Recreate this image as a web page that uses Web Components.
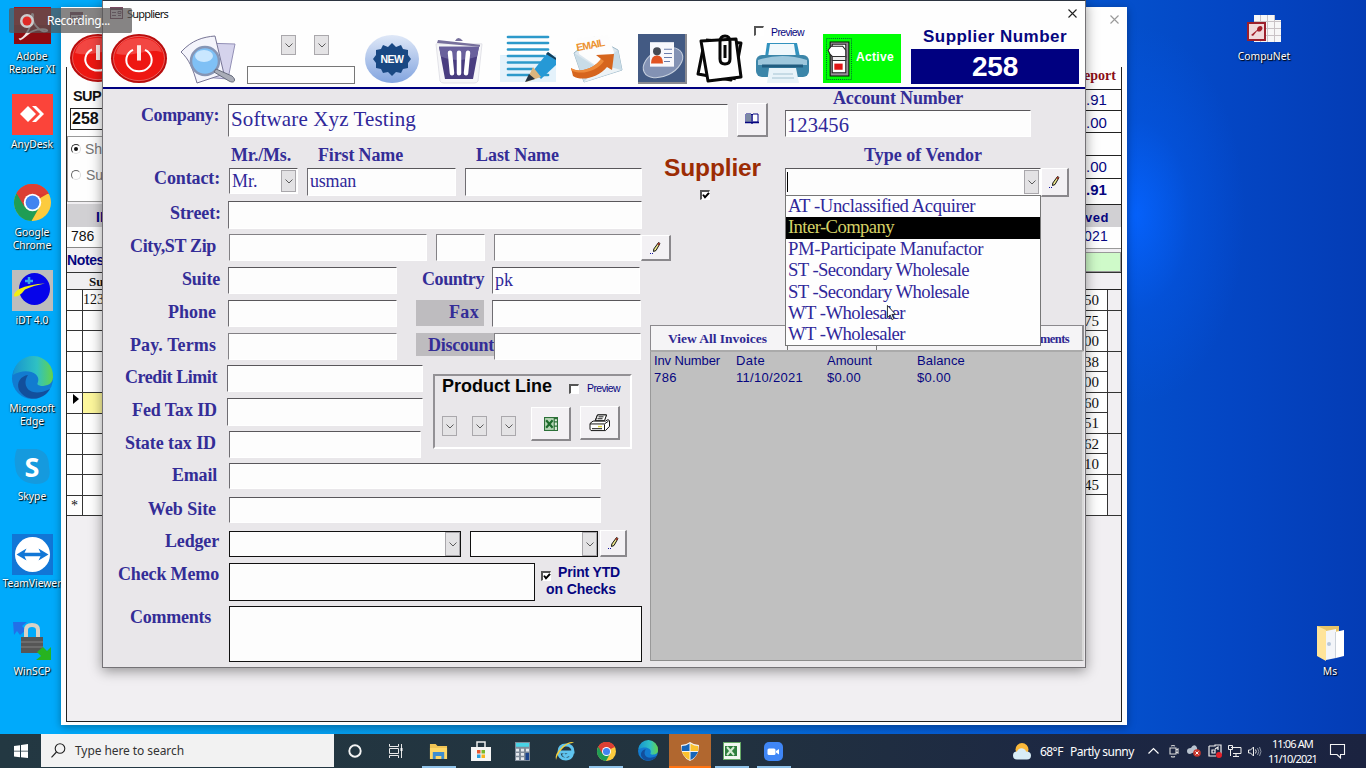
<!DOCTYPE html>
<html lang="en">
<head>
<meta charset="utf-8">
<title>Suppliers</title>
<style>
html,body{margin:0;padding:0}
body{width:1366px;height:768px;overflow:hidden;font-family:"Liberation Sans",Arial,sans-serif}
</style>
</head>
<body>
<desk-top></desk-top>
<script>
const ICONS = {
form:['0 0 13 12','<path fill="#7b4a63" d="M0 0h13v12H0z"/><path fill="#f4eef2" d="M1 3h11v8H1z"/><path stroke="#7b5a73" d="M2 5.5h4M2 8.500h4M8 4.500h3v2H8zM8 8.500h3" fill="none"/>'],
power:['0 0 56 48','<ellipse cx="28" cy="24" rx="28" ry="24" fill="#b90d0d"/><ellipse cx="28" cy="24" rx="25.500" ry="21.700" fill="#ee1712" stroke="#f0807c" stroke-width=".7"/><path d="M5 19C8 7 18 4 28 4s20 4 23 14C38 13 20 24 5 19z" fill="#f4605c" opacity=".65"/><path d="M22 15.500A12.700 11.200 0 1 0 34 15.500" fill="none" stroke="#fff" stroke-width="2"/><path d="M26 11h4v15h-4z" fill="#ffe9e6"/>'],
search:['0 0 56 49','<path d="M24 8l31 1-7 35-26-2z" fill="#d5d3ec" stroke="#9390b6"/><path d="M1 17C12 5 23 2 35 1l9 38-27 9C13 34 9 24 1 17z" fill="#f4f4fb" stroke="#777595"/><circle cx="25" cy="26" r="14" fill="#7fc0f5" stroke="#8695b5" stroke-width="2.500"/><ellipse cx="24" cy="21" rx="9" ry="6" fill="#c9e7ff"/><path d="M36 34l16 7c5 4 2 8-3 5L34 37z" fill="#aaadb8" stroke="#666b7c"/>'],
badge:['0 0 54 48','<defs><linearGradient id="g" x2="0" y2="1"><stop stop-color="#dfe8f7"/><stop offset="1" stop-color="#82a4df"/></linearGradient></defs><ellipse cx="27" cy="24" rx="27" ry="24" fill="url(#g)"/><path d="M27 8l4 4 5-2 2 4 5 1 0 5 3 4-3 4 0 5-5 1-2 4-5-1-4 4-4-4-5 1-2-4-5-1 0-5-3-4 3-4 0-5 5-1 2-4 5 2z" fill="#194883"/>'],
trash:['0 0 52 48','<path d="M3 7h46l-4 38q-1 2-4 2H11q-3 0-4-2z" fill="#f6f6f8" stroke="#e2e2e8"/><path d="M5 3l42 5v2L4 6zM22 4q3-6 8 0z" fill="#77709c"/><path d="M6 10h40l-6 33H12z" fill="#493d80"/><path d="M6 10h40l-2 10Q24 27 8 20z" fill="#69609c"/><path d="M17 16l2 21M26 16v21M35 16l-2 21" stroke="#fff" stroke-width="4.500" stroke-linecap="round"/>'],
edit:['0 0 56 47','<path d="M0 20h56v27H0z" fill="#d4eaf8"/><path d="M0 20Q24 24 56 20V47H0z" fill="#e4f2fb"/><path d="M8 2h40M8 8h40M8 14.500h40M8 21h36M8 27.500h33M8 34h24M8 40h40" stroke="#2c99ca" stroke-width="2.700" stroke-linecap="round"/><path d="M48 17l8 6v7L41 44 33 36z" fill="#2699d6"/><path d="M48 17l8 6v2l-10-6z" fill="#173e58"/><path d="M33 32l8 10-15 5z" fill="#dcb67f"/><path d="M29 39l6 5-10 3z" fill="#26323f"/>'],
mail:['0 0 52 48','<path d="M4 19L24 3l24 13 4 20-38 12z" fill="#dce7ef" stroke="#9db8c7"/><path d="M7 4l31-3 7 20-20 10L9 20z" fill="#fdfdfd"/><path d="M4 19l22 14 22-17 4 20-38 12z" fill="#c9dce7"/><path d="M14 48l16-18 21 6z" fill="#edf3f6"/><path d="M1 34C9 40 25 34 31 25l-5-4 18-1-2 16-5-3C29 43 12 48 3 42z" fill="#d6651d"/><path d="M1 34C9 40 25 34 31 25l3 2C28 37 10 42 1 36z" fill="#ee8a3a"/>'],
card:['0 0 49 49','<path d="M0 0h49v49H0z" fill="#435a83"/><path d="M48 0v48H0" stroke="#8a8a90" stroke-width="2" fill="none"/><ellipse cx="25" cy="28" rx="21" ry="13" fill="#8392b4" stroke="#c7d0de" transform="rotate(-26 25 28)"/><path d="M12 8h24v24H12z" fill="#f8f8fc"/><circle cx="19" cy="17" r="4" fill="#464a54"/><path d="M13 29q0-8 6-8t6 8z" fill="#e15322"/><path d="M26 15h8M26 19h8M26 23h8M26 27h6" stroke="#6a7cab"/>'],
clip:['0 0 46 47','<g fill="#fff" stroke="#080808" stroke-width="3" stroke-linejoin="round"><path d="M6 14L1 39l33 6 5-31z"/><path d="M9 5l35 3-7 37"/><path d="M4 6l35-2 5 38-33 4z"/></g><path d="M23 10v14q0 5 5 5t5-5V7q0-6-5-6t-5 6v3M28 10v13" fill="none" stroke="#080808" stroke-width="3"/>'],
printer:['0 0 53 41','<path d="M11 1h30l3 14H9z" fill="#3292be"/><path d="M14 2h24l2 13H12z" fill="#f0f8fc"/><rect y="13" width="53" height="22" rx="6" fill="#3c86a9"/><path d="M2 18q24-8 49 0v5H2z" fill="#9ec7dc"/><path d="M6 24h41" stroke="#215d80" stroke-width="3"/><path d="M13 26h27l3 15H11z" fill="#e8f3f9"/><path d="M17 32h20M16 36h22" stroke="#a4c3d2"/>'],
toggle:['0 0 25 41','<path d="M.5.500h24v40H.500z" fill="none" stroke="#063" stroke-dasharray="1 1"/><path d="M4 4h18v33H4z" fill="#9a8d9a" stroke="#111"/><path d="M6 6h13v28H6z" fill="#fff" stroke="#222"/><path d="M2 12l3-4h11l3 4v7H7L4 16z" fill="#fff" stroke="#222"/><path d="M6 18h13v4H6z" fill="#eee" stroke="#333"/><path d="M8 25h8v6H8z" fill="#e01515"/>'],
book:['0 0 14 12','<path d="M1 2h5l1 1 1-1h5v8H8l-1 1-1-1H1z" fill="#fff" stroke="#050580"/><path d="M1 2h5v8H1z" fill="#7c8aa4"/><path d="M7 2v10M0 10.500h6M8 10.500h6" stroke="#050580" stroke-width="1.500"/>'],
pencil:['0 0 11 12','<path d="M8.500.500l1.500 1-4 7-2.500 1 .3-2.500z" fill="#ece68a" stroke="#141414"/><path d="M8.500.500l1.500 1-1 2-1.700-1z" fill="#a23a2a"/><path d="M0 11.500h1M2 11.500h1" stroke="#1010a0"/>'],
excel:['0 0 13 13','<path d="M0 0h13v13H0z" fill="#2c7038"/><path d="M1 1h8v11H1z" fill="#b7d6b7"/><path d="M2 3l6 7M8 3l-6 7" stroke="#1d6b2c" stroke-width="2"/><path d="M10 2h2v2h-2zM10 5h2v3h-2zM10 9h2v3h-2z" fill="#dcecd9"/>'],
print2:['0 0 21 19','<path d="M5.500 8.500l3-7.500h9l-3 7.500z" fill="#fff" stroke="#111"/><path d="M1 10l3-2.500h12.500L19 6l1.500 1v6l-4 4.500H2L1 16z" fill="#fff" stroke="#111"/><path d="M6.500 7l2-6h9l-2 6z" fill="#fff" stroke="#111"/><path d="M1 10.500h14.500l4-3M15.500 11v6M3 15.500h10M9.500 3h5M8.500 5h5" fill="none" stroke="#111"/><path d="M9 12.500h4v1.500H9z" fill="#d8d23a"/>'],
close:['0 0 9 9','<path d="M.5.500l8 8m0-8l-8 8" fill="none" stroke="currentColor" stroke-width="1.100"/>'],
chev:['0 0 8 5','<path d="M.5.500L4 4 7.500.500" fill="none" stroke="#5b5b5b"/>'],
tick:['0 0 8 8','<path d="M1 3l2 3 4-5" fill="none" stroke="#000" stroke-width="2"/>'],
cursor:['0 0 10 17','<path d="M.5.500v13l3-3 2 5 2-1-2-4.500h4z" fill="#fff" stroke="#222"/>'],
adobe:['0 0 37 37','<path d="M0 0h37v37H0z" fill="#8e0b10"/><path d="M0 0h37v18H0z" fill="#a81318"/><path d="M7 32c5-2 12-16 11-23-1-3 2-3 1 1-1 8 9 16 14 14 2-2-8-3-14 0C13 26 7 34 6 32z" fill="none" stroke="#f3e4e4" stroke-width="1.700"/>'],
anydesk:['0 0 41 41','<path d="M0 0h41v41H0z" fill="#fb443a"/><path d="M8 20l8-8 8 8-8 8z" fill="#fff"/><path d="M20 12l4 0 8 8-8 8h-4l8-8z" fill="#fff"/>'],
chrome:['0 0 37 37','<circle cx="18.500" cy="18.500" r="18.500" fill="#fccb3e"/><path d="M18.500 18.500L2.500 9.200A18.500 18.500 0 0 1 34.500 9.200z" fill="#d93a2f"/><path d="M18.500 18.500L2.500 9.200A18.500 18.500 0 0 0 17.500 37l8-14z" fill="#1f9d55"/><path d="M18.500 10h16.400a18.500 18.500 0 0 0-.4-.8A18.500 18.500 0 0 0 2.500 9.200l8 13.500z" fill="#dc3f34"/><circle cx="18.500" cy="18.500" r="8.700" fill="#fff"/><circle cx="18.500" cy="18.500" r="6.900" fill="#4184f0"/>'],
idt:['0 0 41 41','<path d="M0 0h41v41H0z" fill="#bdbdbd"/><ellipse cx="22.500" cy="19" rx="15.500" ry="16" fill="#0604ea"/><path d="M7 19Q18 14 33 13.500q-12 2-20 6-6 8-11 7Q1 23 7 19z" fill="#f2ee12"/><path d="M17 7v7M13 11h8" stroke="#39a6ed" stroke-width="2.500"/>'],
edge:['0 0 41 41','<defs><linearGradient id="e" x2="1"><stop stop-color="#1694d0"/><stop offset=".6" stop-color="#2fc1c3"/><stop offset="1" stop-color="#64d34b"/></linearGradient></defs><circle cx="20.500" cy="20.500" r="20.500" fill="#127bd0"/><path d="M1 17A20 20 0 0 1 41 19c0 7-6 9-12 9-4-1-4-2-3-4 3-9-12-15-25-7z" fill="url(#e)"/><path d="M16 17c-7 10 1 24 22 14C32 42 14 45 7 32c-3-8 2-14 9-15z" fill="#124f9c"/>'],
skype:['0 0 37 35','<path d="M3 0h20q13 2 13 18 4 17-14 17Q6 34 2 22-1 8 3 0z" fill="#159ade"/>'],
tv:['0 0 41 41','<path d="M0 0h41v41H0z" fill="#1176d6"/><circle cx="20.500" cy="20.500" r="17.500" fill="#fff"/><path d="M4.500 20.500l10-6-2 4.300h16l-2-4.300 10 6-10 6 2-4.300h-16l2 4.300z" fill="#1176d6"/>'],
winscp:['0 0 38 38','<path d="M0 0h14l-5 4 4 4-6 5-3-4-3 4z" fill="#2270e8"/><path d="M13 17V8q0-5 6-5t6 5v9" fill="none" stroke="#d9d2c6" stroke-width="4"/><path d="M8 15h22v16H8z" fill="#565656"/><path d="M8 20h22M8 25h22" stroke="#6c6c6c" stroke-width="2"/><path d="M38 38H23l5-4-4-4 6-5 4 4 4-4z" fill="#27b31f"/>'],
access:['0 0 34 27','<path d="M7 0h20v5h7v22H7z" fill="#f7f7f7"/><path d="M13.500 0v27M20.500 0v27M27.500 0v27M7 6.500h27M7 13.500h27M7 20.500h27" stroke="#c9c3c6"/><path d="M1 8h17v17H1z" fill="#f0d9da" stroke="#9c1f2b" stroke-width="2"/><path d="M4 20l6-5q0-4 4-4 3 2 0 5-2 1-4 0l-4 5z" fill="#a21f2a"/>'],
folder:['0 0 27 36','<path d="M0 1h22v30H0z" fill="#e7c468"/><path d="M0 1l9 4v31l-9-5z" fill="#ffe49a"/><path d="M9 6l10-2v29l-10 2z" fill="#f3f5f9"/><path d="M18 7l9-2v26l-8 2z" fill="#fff"/><path d="M18.500 7v26" stroke="#ccd2da"/><circle cx="12" cy="19" r="2" fill="#b7c7da"/>'],
rec:['0 0 18 18','<circle cx="9" cy="9" r="7" fill="#ccc"/><circle cx="9" cy="9" r="4.500" fill="#e02b26"/>'],
win:['0 0 14 14','<path d="M0 2l6-.8v5.500H0zM7 1l7-1v6.700H7zM0 7.600h6v5.600L0 12.400zM7 7.600h7V14l-7-.8z" fill="#fff"/>'],
mag:['0 0 15 15','<circle cx="9" cy="5.500" r="4.800" fill="none" stroke="#222" stroke-width="1.100"/><path d="M5.500 9L.5 14.300" stroke="#222" stroke-width="1.200"/>'],
ring:['0 0 14 14','<circle cx="7" cy="7" r="5.700" fill="none" stroke="#f4f4f4" stroke-width="1.900"/>'],
task:['0 0 15 14','<path d="M.5 0v2.500h9V0M.5 14v-2.500h9V14M.5 4.500h9v5h-9zM12.500 0v14" fill="none" stroke="#e8e8e8"/><path d="M11.500 4h2v3h-2z" fill="#fff"/>'],
files:['0 0 20 17','<path d="M1 1h6l2 2h10v13H1z" fill="#f0c455"/><path d="M1 5h18v11H1z" fill="#ffd867"/><path d="M4 9h12v7h-3v-3H7v3H4z" fill="#3f8ed0"/>'],
store:['0 0 20 20','<path d="M6 6V1h8v5" fill="none" stroke="#eee" stroke-width="1.500"/><path d="M0 6h20v14H0z" fill="#f5f5f5"/><path d="M6 9h3.500v3.500H6z" fill="#e8552c"/><path d="M10.500 9H14v3.500h-3.500z" fill="#76b82a"/><path d="M6 13.500h3.500V17H6z" fill="#2a9fdc"/><path d="M10.500 13.500H14V17h-3.500z" fill="#f6b51e"/>'],
calc:['0 0 15 20','<path d="M0 0h15v20H0z" fill="#7f8b99"/><path d="M1 1h13v4H1z" fill="#49d3e6"/><path d="M1 7h3v3H1zM6 7h3v3H6zM11 7h3v3h-3zM1 11.500h3v3H1zM6 11.500h3v3H6zM1 16h3v3H1zM6 16h3v3H6z" fill="#e4e8ec"/><path d="M10.500 11.500H14V19h-3.500z" fill="#1c458c"/>'],
ie:['0 0 20 20','<path d="M4 11h14q0-7-7-7t-7 7 7 7q5 0 6-4h-4q-3 2-5-1" fill="none" stroke="#5fc4ef" stroke-width="3"/><path d="M1 19Q-1 13 8 5 16-1 19 2q-6-1-12 6-5 6-6 11z" fill="#f4cf3d"/>'],
shield:['0 0 18 19','<path d="M9 0q4 3 9 3 0 12-9 16Q0 15 0 3q5 0 9-3z" fill="#f3f3f3"/><path d="M8.500 1.500V9H1q-.5-3 0-5 4 0 7.500-2.500zM9.500 10H17q-2 5-7.500 8z" fill="#1665b8"/><path d="M9.500 1.500Q13 4 17 4q.5 2 0 5H9.500zM1 10h7.500v8Q3 15 1 10z" fill="#fbc12d"/>'],
xl:['0 0 18 18','<path d="M0 0h18v18H0z" fill="#66a866"/><path d="M1 1h16v16H1z" fill="#f2f7f0"/><path d="M2 4h12v10H2z" fill="#2e7f3d"/><path d="M4 5l7 8M11 5l-7 8" stroke="#d6ecd3" stroke-width="2"/>'],
zoom:['0 0 19 19','<rect width="19" height="19" rx="5" fill="#3f86f6"/><rect x="3.500" y="6.500" width="8" height="6.500" rx="1.500" fill="#fff"/><path d="M12 9l3-2v5.500l-3-2z" fill="#fff"/>'],
sun:['0 0 18 17','<circle cx="9" cy="6.500" r="6.500" fill="#fab83a"/><path d="M4 16.500q-4 0-4-4t4-4q2-4 6-3 3 1 3 3 5 0 5 4t-4 4z" fill="#d8edf7"/>'],
up:['0 0 11 6','<path d="M.5 5.500l5-5 5 5" fill="none" stroke="#fff" stroke-width="1.200"/>'],
meet:['0 0 10 13','<path d="M1 3h6v6H1zM7 5l2-1v4L7 7M2 1q2-1 4 0M2 11.500q2 1 4 0" fill="none" stroke="#ddd" stroke-width="1.100"/>'],
cloud:['0 0 14 12','<path d="M3 9q-3 0-3-3t4-3q2-4 5-2 2 2 1 5z" fill="#b9c3cf"/><circle cx="10" cy="8" r="3.800" fill="#c8372d"/><path d="M8.500 6.500l3 3m0-3l-3 3" stroke="#fff"/>'],
lang:['0 0 14 14','<path d="M1 2h6v-1h6v9M1 2v10h7M4 6h3v3H4zM7 5l3-2v3" fill="none" stroke="#eee" stroke-width="1.200"/><circle cx="11" cy="11" r="3" fill="#e5202a"/>'],
net:['0 0 14 12','<path d="M3 2.500h10v6H5M8 9v2.500M5 11.500h6M.5.500h4v4H.500zM2.500 5v6" fill="none" stroke="#eee"/>'],
vol:['0 0 14 11','<path d="M.5 4h2l3-3v9l-3-3h-2z" fill="none" stroke="#eee"/><path d="M7.500 3.500q1.500 2 0 4" fill="none" stroke="#eee"/><path d="M9.500 2q2.500 3.500 0 7M11.500 1q3 4.500 0 9" fill="none" stroke="#8c94a4"/>'],
note:['0 0 15 15','<path d="M.5.500h14v10h-4v3.500l-3.500-3.500H.500z" fill="none" stroke="#f4f4f4" stroke-width="1.100"/>']
};
const SANS="'Liberation Sans',Arial,sans-serif", SERIF="'Liberation Serif','Times New Roman',serif", UI="'Noto Sans','Open Sans',sans-serif";
function define(name, css, render){
  customElements.define(name, class extends HTMLElement{
    connectedCallback(){
      if(this.shadowRoot) return;
      const a=(k,d='')=>this.hasAttribute(k)?this.getAttribute(k):d;
      this.attachShadow({mode:'open'}).innerHTML='<style>*{box-sizing:border-box}:host{display:block;box-sizing:border-box;flex:none}'+css+'</style>'+render(a);
    }
  });
}
const ic=(n,w,h,s='')=>`<ui-icon name="${n}" style="width:${w}px;height:${h}px;${s}"></ui-icon>`;
const fit=(t,w,s='')=>`<fit-text w="${w}" style="${s}">${t}</fit-text>`;

define('ui-icon','svg{display:block;width:100%;height:100%;overflow:visible}',a=>{
  const [vb,body]=ICONS[a('name')];
  return `<svg viewBox="${vb}" preserveAspectRatio="none">${body}</svg>`;
});
define('x-field',`:host{height:26px;background:#fdfdfd;border:1px solid;border-color:#59575b #fff #fff #6f6d72;padding:1px;color:#30289a;font-family:${SERIF};font-size:18px;white-space:nowrap;overflow:hidden}
 :host([flat]){border:1px solid #111;padding:0}
 :host([off]){border-color:#838185 #fff #fff #838185}
 div{display:flex;height:100%;justify-content:space-between}
 .t{padding-left:var(--pad,1px);line-height:calc(var(--lh,22px))}
 .b{width:15px;background:#e3e2e4;border:1px solid #a9a7ab;display:flex;align-items:center;justify-content:center}`,
 a=>`<div><span class="t"><slot></slot></span>${a('combo',null)!==null?`<span class="b">${ic('chev',8,5)}</span>`:''}</div>`);
define('x-drop',`:host{width:15px;height:20px;background:#e4e3e5;border:1px solid #aaa8ac}div{height:100%;display:flex;align-items:center;justify-content:center}`,()=>`<div>${ic('chev',8,5)}</div>`);
define('x-button',`:host{background:#f3f1f4;border:solid;border-width:1px 2px 2px 1px;border-color:#fff #8a888c #8a888c #fff}div{height:100%;display:flex;align-items:center;justify-content:center}`,()=>`<div><slot></slot></div>`);
define('x-check',`:host{width:10px;height:10px;background:#fff;border:solid;border-width:2px 1px 1px 2px;border-color:#555 #fff #fff #555}`,a=>a('on',null)!==null?ic('tick',8,7):'');
define('x-label',`:host{color:#342d97;font:bold 18px/20px ${SERIF};display:flex;justify-content:flex-end;white-space:nowrap}`,a=>`<slot></slot>`);
define('f-row',`:host{display:flex;align-items:flex-start}`,()=>`<slot></slot>`);
const lab=(t,w,right,inputX,mt)=>`<x-label style="width:${inputX-103}px;padding-right:${inputX-right}px;margin-top:${mt}px">${fit(t,w)}</x-label>`;
const fld=(w,h,attrs='',t='',gap=0)=>`<x-field ${attrs} style="width:${w}px;height:${h}px;margin-left:${gap}px">${t}</x-field>`;
const head=(t,w,gap)=>`<x-label style="margin-left:${gap}px">${fit(t,w)}</x-label>`;
const pen=(w,h,gap,mt=0)=>`<x-button style="width:${w}px;height:${h}px;margin-left:${gap}px;margin-top:${mt}px">${ic('pencil',11,12)}</x-button>`;
const row=(h,next,c)=>`<f-row style="height:${h}px;margin-bottom:${next}px">${c}</f-row>`;

define('product-line',`:host{width:199px;height:75px;border:2px solid;border-color:#939195 #fff #fff #939195;padding:0 9px 0 7px}
 .a{display:flex;height:20px;align-items:center;font:bold 18px/20px ${SANS};color:#050505}
 .p{font:10.500px/14px ${SANS};color:#060680;margin-left:8px}
 .b{display:flex;align-items:flex-start}`,()=>`
 <div class="a">${fit('Product Line',110)}<x-check style="margin:5px 0 0 17px"></x-check><span class="p" style="margin-top:3px">${fit('Preview',33)}</span></div>
 <div class="b"><x-drop style="margin:20px 0 0 0"></x-drop><x-drop style="margin:20px 0 0 15px"></x-drop><x-drop style="margin:20px 0 0 14px"></x-drop>
 <x-button style="width:40px;height:34px;margin:11px 0 0 15px">${ic('excel',14,14)}</x-button><x-button style="width:40px;height:34px;margin:10px 0 0 9px">${ic('print2',21,18)}</x-button></div>`);

define('supplier-form',`.g{background:#bebcbf;height:26px}.split{display:flex}.p{font:bold 14px/17px ${SANS};color:#060680}`,()=>
 row(23,0,`${head('Mr./Ms.',60,128)}${head('First Name',85,27)}${head('Last Name',83,73)}`)+
 row(28,5,lab('Contact:',66,220,229,0)+fld(69,26,'combo','Mr.')+fld(149,28,'',fit('usman',46),9)+fld(177,28,'','',9))+
 row(28,5,lab('Street:',51,221,228,2)+fld(414,28))+
 row(27,6,lab('City,ST Zip',86,216,229,2)+fld(198,27,'off')+fld(49,27,'off','',9)+fld(147,27,'off','',9)+pen(30,26,0,1))+
 row(27,6,lab('Suite',38,220,228,2)+fld(169,27)+`<x-label style="width:96px;padding-right:9px;margin-top:2px">${fit('Country',62)}</x-label>`+fld(148,27,'','pk',-1))+
 row(27,6,lab('Phone',48,216,228,2)+fld(169,27)+`<x-label class="g" style="width:68px;padding:2px 5px 0 0;margin-left:19px">${fit('Fax',30)}</x-label>`+fld(149,27,'','',8))+
 row(27,5,lab('Pay. Terms',86,216,228,2)+fld(169,27,'off')+`<x-label class="g" style="width:78px;height:23px;padding:2px 0 0 0;margin-left:19px">${fit('Discount',66)}</x-label>`+fld(147,27,'off'))+
 `<div class="split"><div style="width:330px">`+
 row(27,6,lab('Credit Limit',92,217,227,2)+fld(196,27))+
 row(28,5,lab('Fed Tax ID',85,217,227,2)+fld(196,28))+
 row(27,5,lab('State tax ID',91,216,229,2)+fld(192,27))+
 `</div><product-line style="margin-top:9px"></product-line></div>`+
 row(26,8,lab('Email',45,217,229,2)+fld(372,26))+
 row(26,8,lab('Web Site',68,216,229,2)+fld(372,26))+
 row(26,6,lab('Ledger',54,219,229,0)+fld(232,26,'flat combo')+fld(128,26,'flat combo','',9)+pen(27,27,2,-1))+
 row(38,5,lab('Check Memo',101,219,229,1)+fld(306,38,'flat')+`<x-check on style="margin:8px 0 0 6px"></x-check><div class="p" style="margin-left:-5px;margin-top:1px">${fit('Print YTD',62,'margin-left:12px;display:block')}${fit('on Checks',70,'display:block')}</div>`)+
 row(56,0,lab('Comments',81,211,229,1)+fld(413,56,'flat')));

define('company-row',`:host{display:flex}`,()=>
 `<x-label style="width:125px;padding-right:9px;margin-top:16px">${fit('Company:',78)}</x-label><x-field style="width:500px;height:33px;margin-top:15px;font-size:21px;--lh:27px">${fit('Software Xyz Testing',185)}</x-field><x-button style="width:31px;height:34px;margin:14px 0 0 9px">${ic('book',14,12,'margin-top:-3px')}</x-button>`);
define('supplier-flag',`:host{display:flex;flex-direction:column;color:#9c2c04;font:bold 24.500px/30px ${SANS}}`,()=>`${fit('Supplier',97,'margin:16px 0 0 14px')}<x-check on style="margin:7px 0 0 50px"></x-check>`);
define('vendor-list',`:host{width:256px;height:151px;background:#fefefe;border:1px solid #777;color:#30289a;font:18.700px/21.400px ${SERIF};white-space:nowrap}
 div{padding-left:2px;height:21.400px}fit-text{position:relative;top:-1px}.s{background:#000;color:#d5d166}`,()=>
 [['AT -Unclassified Acquirer',187],['Inter-Company',106,1],['PM-Participate Manufactor',195],['ST -Secondary Wholesale',181],['ST -Secondary Wholesale',181],['WT -Wholesaler',117],['WT -Wholesaler',117]].map(([t,w,s])=>`<div class="${s?'s':''}">${fit(t,w)}</div>`).join(''));
define('vendor-panel',`:host{padding-left:10px;position:relative}.c{display:flex}vendor-list{position:absolute;left:10px;top:106px;z-index:5}.cur{position:absolute;left:112px;top:216px;z-index:6}`,()=>
 `<x-label style="width:178px;height:21px;line-height:19px">${fit('Account Number',130)}</x-label><x-field style="width:246px;height:27px;font-size:20.600px;--lh:26px;--pad:0px">${fit('123456',62)}</x-field>
 <x-label style="width:197px;height:20px;line-height:19px;margin-top:9px">${fit('Type of Vendor',118)}</x-label>
 <div class="c" style="margin-top:2px"><x-field combo style="width:256px;height:28px"><span style="display:inline-block;width:1px;height:20px;background:#000;margin:2px 0 0 -1px"></span></x-field>${pen(28,29,0)}</div>
 <vendor-list></vendor-list><div class="cur">${ic('cursor',9,16)}</div>`);
define('invoice-tabs',`.tabs{display:flex;height:26px;font:bold 13.500px/25px ${SERIF};color:#2f2893;background:#f5f4f6;border:1px solid #8b898d;border-right-width:2px;border-bottom-color:#aaa}
 .tabs div{border-right:1px solid #777;white-space:nowrap}
 .list{height:310px;background:#c0c0c0;border:solid;border-width:1px 2px 1px 1px;border-color:#aaa #d8d8d8 #8b8b8b #999;font:13px/17px ${SANS};color:#060680;padding:0 0 0 3px}
 .l{display:grid;grid-template-columns:82px 91px 90px 120px}`,()=>
 `<div class="tabs"><div style="width:137px;padding-left:17px">${fit('View All Invoices',99)}</div><div style="width:89px"></div><div style="width:162px;border:0"></div><div style="border:0">${fit('ments',29,'font-size:12.500px;margin-left:1px')}</div></div>
 <div class="list"><div class="l"><span>${fit('Inv Number',66)}</span><span>${fit('Date',29)}</span><span>${fit('Amount',45)}</span><span>${fit('Balance',48)}</span></div>
 <div class="l"><span>${fit('786',23)}</span><span>${fit('11/10/2021',67)}</span><span>${fit('$0.00',34)}</span><span>${fit('$0.00',34)}</span></div></div>`);
define('tool-bar',`:host{display:flex;height:60px;align-items:flex-start}
 .n{display:grid;place-items:center;font:bold 10.500px ${SANS};color:#fff}.n>*{grid-area:1/1}
 .m{display:grid}.m>*{grid-area:1/1}.et{font:bold 10.500px/12px ${SANS};color:#ec9230;transform:rotate(-11deg);margin:3px 0 0 9px}
 .act{width:78px;height:49px;background:#00ff04;display:flex;align-items:center;color:#fff;font:bold 12px ${SANS}}
 .num{width:168px;height:35px;background:#000080;color:#fff;font:bold 28px/36px ${SANS};display:flex;justify-content:center}
 .pv{display:flex;font:10.500px/12px ${SANS};color:#060680}`,()=>
 `${ic('power',56,49,'margin:7px 0 0 8px')}${ic('search',56,49,'margin:8px 0 0 13px')}
 <div style="margin:8px 0 0 11px"><div style="display:flex;padding-left:34px"><x-drop></x-drop><x-drop style="margin-left:18px"></x-drop></div><div style="width:108px;height:18px;border:1px solid #777;margin-top:11px"></div></div>
 <div class="n" style="margin:8px 0 0 10px">${ic('badge',54,48)}${fit('NEW',23)}</div>
 ${ic('trash',52,47,'margin:10px 0 0 14px')}${ic('edit',56,47,'margin:8px 0 0 15px')}
 <div class="m" style="margin:7px 0 0 14px">${ic('mail',52,48)}<span class="et">${fit('EMAIL',30)}</span></div>
 ${ic('card',49,50,'margin:7px 0 0 16px')}${ic('clip',46,47,'margin:8px 0 0 10px')}
 <div style="margin:-1px 0 0 11px"><div class="pv"><x-check></x-check>${fit('Preview',33,'margin-left:7px')}</div>${ic('printer',53,41,'margin:4px 0 0 2px')}</div>
 <div class="act" style="margin:7px 0 0 14px">${ic('toggle',26,42,'margin-left:3px')}${fit('Active',38,'margin:-3px 0 0 4px')}</div>
 <div style="margin:0 0 0 10px"><div style="font:bold 17px/20px ${SANS};color:#060680;padding-left:12px;height:22px">${fit('Supplier Number',144)}</div><div class="num">${fit('258',46)}</div></div>`);
define('suppliers-window',`:host{width:984px;height:668px;border:1px solid #747276;border-top-color:#2c3440;background:#e9e7ea;box-shadow:0 3px 12px rgba(0,0,0,.4)}
 .hd{background:#fefefe;height:88px;border-bottom:2px solid #000080}
 .ti{height:26px;display:flex;align-items:center;font:11px ${UI};color:#111;padding:0 8px 2px 7px}
 .bd{display:grid;grid-template-columns:547px 125px 1fr;grid-template-rows:48px 188px 1fr;height:578px}`,()=>
 `<div class="hd"><div class="ti">${ic('form',13,12)}<span style="margin-left:4px">${fit('Suppliers',41)}</span>${ic('close',9,9,'margin-left:auto;color:#222')}</div><tool-bar></tool-bar></div>
 <div class="bd"><company-row style="grid-area:1/1/2/3"></company-row><supplier-form style="grid-area:2/1/4/2;padding-top:8px"></supplier-form><supplier-flag style="grid-area:2/2"></supplier-flag><vendor-panel style="grid-area:1/3/3/4"></vendor-panel><invoice-tabs style="grid-area:3/2/4/4;margin-right:1px"></invoice-tabs></div>`);

define('back-window',`:host{width:1066px;height:718px;background:#fefefe;padding:0 5px 3px 5px;box-shadow:0 2px 8px rgba(0,0,0,.35);font:14px/20px ${SANS};color:#111}
 .top{display:flex;height:60px;justify-content:space-between;position:relative}
 .main{display:flex;justify-content:space-between;height:655px;border:solid #222;border-width:0 1px 1px 1px;background:#f1eff2}
 .l{width:40px;overflow:hidden;white-space:nowrap}.r{width:38px;overflow:hidden;white-space:nowrap;color:#060680;font-size:15px}
 .r>div{border-bottom:1px solid #222;background:#fefefe}
 .nav{color:#060680;font-weight:bold}
 .grid{background:#fefefe;font-family:${SERIF}}.grid div{display:flex;height:20.600px;border-top:1px solid #333}.grid i{width:16px;border-right:1px solid #333;font-style:normal;text-align:center}
 .rg{color:#111;font:15px/20px ${SERIF}}.rg div{display:grid;grid-template-columns:1fr 14px;height:20.500px;border-bottom:1px solid #333}.rg b{border-left:1px solid #333;background:#f1eff2}`,()=>
 `<div class="top"><div style="padding:5px 0 0 4px">${ic('form',13,12)}<div style="margin-top:10px">${ic('power',56,48)}</div></div><div style="padding:8px 3px 0 0;color:#999">${ic('close',9,9)}</div></div>
 <div class="main"><div class="l">
 <div style="height:69px;background:#fefefe;padding:19px 0 0 6px"><b style="font-size:14.500px;display:block;line-height:20px">${fit('SUP',28)}</b><div style="border:1px solid #222;height:22px;margin:2px 0 0 -3px;font:bold 16px/20px ${SANS};padding-left:1px">258</div></div>
 <div style="height:66px;background:#fefefe;border:1px solid #999;padding:2px 0 0 3px;color:#777"><div style="height:26px;display:flex"><span style="width:10px;height:10px;border:1px solid #333;border-right-color:#ddd;border-bottom-color:#ddd;border-radius:50%;margin:5px 4px 0 0;padding:2px"><span style="display:block;width:4px;height:4px;background:#111;border-radius:50%"></span></span>Sh</div><div style="display:flex"><span style="width:10px;height:10px;border:1px solid #666;border-right-color:#ddd;border-bottom-color:#ddd;border-radius:50%;margin:5px 5px 0 0"></span>Su</div></div>
 <div class="nav" style="height:23px;background:#d1d0d3;margin-top:2px;padding-left:29px;line-height:26px">II</div>
 <div style="height:21px;background:#fefefe;border-bottom:1px solid #888;padding-left:4px;line-height:18px">786</div>
 <div class="nav" style="height:24px;line-height:25px">${fit('Notes',37)}</div>
 <div class="grid"><div style="height:17px;background:#f0eff1;font:bold 13px/17px ${SERIF};padding-left:22px">Su</div>
 <div><i></i>123</div><div><i></i></div><div><i></i></div><div><i></i></div><div><i></i></div><div style="background:linear-gradient(90deg,#fefefe 16px,#fdf79c 16px)"><i style="padding:1px 0 0 2px"><span style="display:block;width:0;height:0;border-left:6px solid #000;border-top:5px solid transparent;border-bottom:5px solid transparent;margin-left:4px"></span></i></div><div><i></i></div><div><i></i></div><div><i></i></div><div><i></i></div><div style="border-bottom:1px solid #333"><i>*</i></div></div>
 </div>
 <div class="r"><div style="height:23px;color:#8b0d16;font:bold 14px/17px ${SERIF};padding-left:1px">${fit('eport',32)}</div>
 <div style="height:21px;line-height:19px;padding-left:3px">.91</div><div style="height:22px;line-height:23px;padding-left:3px">.00</div><div style="height:23px"></div><div style="height:23px;line-height:22px;padding-left:3px">.00</div><div style="height:26px;line-height:22px;font-weight:bold;padding-left:3px">.91</div>
 <div style="height:22px;background:#d1d0d3;border:0;font:bold 13px/26px ${SANS}">${fit('ved',24,'padding-left:2px')}</div><div style="height:22px;line-height:19px;padding-left:1px;font-size:14px;border-color:#999">${fit('021',24)}</div>
 <div style="height:20px;margin-top:3px;background:#cffac9;border:1px solid #999"></div><div style="height:18px;background:#f1eff2;border-top:1px solid #333"></div>
 <div class="rg" style="border:0">${['50','75','00','38','00','60','51','62','10','45',''].map(t=>`<div><span style="padding-left:1px">${t}</span><b></b></div>`).join('')}</div></div></div>`);

define('desk-icon',`:host{position:absolute;width:72px;color:#fff;font:10.300px/13px ${UI};text-align:center;text-shadow:1px 1px 1px #000,0 0 2px rgba(0,0,0,.6);white-space:nowrap}
 .i{display:grid;justify-content:center;align-items:center}.i>*{grid-area:1/1}span{font:bold 27px/32px 'Open Sans',sans-serif;text-shadow:none}p{margin:var(--g,4px) 0 0}`,a=>
 `<div class="i">${ic(a('icon'),a('w'),a('h'))}${a('glyph')?`<span>${a('glyph')}</span>`:''}</div><p><slot></slot></p>`);
define('rec-chip',`:host{position:absolute;width:123px;height:25px;background:rgba(88,84,84,.72);border-radius:2px}div{display:flex;align-items:center;height:100%;padding-left:9px;font:12px ${UI};color:#fff}`,()=>`<div>${ic('rec',18,18)}${fit('Recording...',63,'margin-left:11px')}</div>`);
define('task-item',`:host{width:41.900px;height:34px}div{height:100%;display:flex;align-items:center;justify-content:center;position:relative;background:var(--bg,none)}i{position:absolute;bottom:0;left:4px;right:4px;height:2px;background:#90c3ea}`,a=>`<div>${ic(a('icon'),a('w'),a('h'))}${a('on')?`<i style="${a('on')=='2'?'background:#ff7413;left:0;right:0':''}"></i>`:''}</div>`);
define('task-bar',`:host{display:flex;height:34px;background:linear-gradient(90deg,#233842,#22333f 50%,#1c2743 80%,#1b2340);color:#fff;font:12px/15px ${UI};align-items:center}
 .s{width:293px;height:33px;align-self:flex-start;background:#f2f2f2;display:flex;align-items:center;color:#333;padding-left:10px}
 .clk{text-align:center;font-size:11px}`,()=>
 `<task-item style="width:41px" icon="win" w="14" h="14"></task-item><div class="s">${ic('mag',15,15)}${fit('Type here to search',109,'margin-left:9px')}</div>
 <task-item icon="ring" w="14" h="14"></task-item><task-item icon="task" w="15" h="14" style="width:42px"></task-item>
 ${[['files',19,17,1],['store',20,20],['calc',15,19],['ie',20,20],['chrome',19,19,1],['edge',20,20],['shield',18,19,2],['xl',18,18,1],['zoom',19,19,1]].map(([n,w,h,o])=>`<task-item icon="${n}" w="${w}" h="${h}" on="${o||''}" style="${n=='shield'?'--bg:#b1672f':''}"></task-item>`).join('')}
 ${ic('sun',18,17,'margin-left:218px')}${fit('68°F',23,'margin-left:9px')}${fit('Partly sunny',64,'margin-left:7px')}${ic('up',11,6,'margin-left:14px')}${ic('meet',10,13,'margin-left:10px')}${ic('cloud',14,12,'margin-left:8px')}${ic('lang',14,14,'margin-left:7px')}${ic('net',14,12,'margin-left:6px')}${ic('vol',14,11,'margin-left:6px')}
 <div class="clk" style="margin-left:6px"><div>${fit('11:06 AM',41)}</div><div>${fit('11/10/2021',49)}</div></div>${ic('note',15,15,'margin-left:13px')}`);
define('desk-top',`:host{width:1366px;height:768px;position:relative;overflow:hidden;background:radial-gradient(ellipse 110px 190px at 1135px 215px,rgba(5,98,253,.95),rgba(4,88,236,.4) 50%,transparent),linear-gradient(90deg,#00aafb 0,#00aafb 8%,#0796e6 32%,#0562d6 62%,#0450cc 82%,#0446c4 90%,#043cb5 100%)}
 back-window{position:absolute;left:61px;top:7px}suppliers-window{position:absolute;left:102px;top:0}
 task-bar{position:absolute;left:0;right:0;bottom:0}`,()=>
 `${[['adobe',37,37,7,'Adobe<br>Reader XI'],['anydesk',41,41,94,'AnyDesk'],['chrome',37,37,184,'Google<br>Chrome'],['idt',41,41,270,'iDT 4.0'],['edge',41,41,358,'Microsoft<br>Edge'],['skype',36,35,449,'Skype','S'],['tv',41,41,534,'TeamViewer'],['winscp',38,38,622,'WinSCP']].map(([n,w,h,t,l,g])=>`<desk-icon icon="${n}" w="${w}" h="${h}" glyph="${g||''}" style="left:-4px;top:${t}px;--g:${{adobe:6,anydesk:3,chrome:5,idt:3,edge:3,skype:6,tv:2,winscp:5}[n]}px">${l}</desk-icon>`).join('')}
 <desk-icon icon="access" w="34" h="27" style="left:1228px;top:15px;--g:8px">CompuNet</desk-icon><desk-icon icon="folder" w="27" h="36" style="left:1294px;top:625px">Ms</desk-icon>
 <back-window></back-window><suppliers-window></suppliers-window><rec-chip style="left:9px;top:8px"></rec-chip><task-bar></task-bar>`);
customElements.define('fit-text',class extends HTMLElement{
  connectedCallback(){
    if(this.shadowRoot) return;
    this.attachShadow({mode:'open'}).innerHTML='<style>:host{display:inline-block;white-space:nowrap;flex:none}</style><span><slot></slot></span>';
    const n=this.textContent.length, w=this.shadowRoot.querySelector('span').getBoundingClientRect().width;
    if(w) this.style.letterSpacing=((+this.getAttribute('w')-w)/n).toFixed(3)+'px';
  }
});
</script>
</body>
</html>
